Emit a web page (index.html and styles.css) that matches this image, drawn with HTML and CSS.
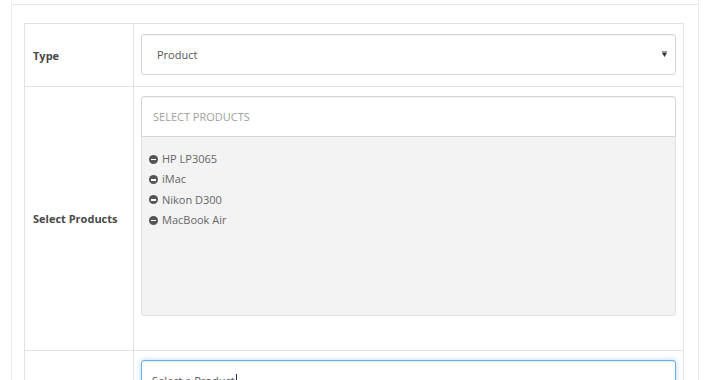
FILE: index.html
```html
<!DOCTYPE html>
<html>
<head>
<meta charset="utf-8">
<link rel="stylesheet" href="styles.css">
</head>
<body>
<div class="panel">
  <div class="panel-heading"></div>
  <div class="panel-body">
    <table class="form-table">
      <tr class="row-type">
        <td class="label-cell">Type</td>
        <td class="field-cell">
          <div class="form-select">
            <span class="select-text">Product</span>
            <svg class="caret" width="5" height="6" viewBox="0 0 5 6"><path d="M0 0.5 H5 V1.3 H0 Z M0 1.8 H5 L2.5 6 Z" fill="#333"/></svg>
          </div>
        </td>
      </tr>
      <tr class="row-products">
        <td class="label-cell">Select Products</td>
        <td class="field-cell products-cell">
          <div class="search-input">SELECT PRODUCTS</div>
          <div class="well">
            <ul class="product-list">
              <li><span class="minus-icon"></span>HP LP3065</li>
              <li><span class="minus-icon"></span>iMac</li>
              <li><span class="minus-icon"></span>Nikon D300</li>
              <li><span class="minus-icon"></span>MacBook Air</li>
            </ul>
          </div>
        </td>
      </tr>
      <tr class="row-product">
        <td class="label-cell"></td>
        <td class="field-cell">
          <div class="focus-input"><span class="focus-text">Select a Product</span><span class="text-cursor"></span></div>
        </td>
      </tr>
    </table>
  </div>
</div>
</body>
</html>
```

FILE: styles.css
```css
html, body {
  margin: 0;
  padding: 0;
  background: #ffffff;
  font-family: "Open Sans", "Noto Sans", sans-serif;
  font-size: 11px;
  color: #555;
  overflow: hidden;
}

.panel {
  margin-left: 11px;
  width: 686px;
  border-left: 1px solid #ececec;
  border-right: 1px solid #ececec;
  height: 400px;
}

.panel-heading {
  height: 4px;
  border-bottom: 1px solid #e8e8e8;
}

.panel-body {
  padding: 18px 14px 0 12px;
}

.form-table {
  width: 660px;
  border-collapse: collapse;
  border: 1px solid #e2e2e2;
}

.form-table td {
  border: 1px solid #e2e2e2;
  vertical-align: middle;
}

.label-cell {
  width: 100px;
  padding: 0 0 0 8px;
  font-weight: 700;
  color: #484848;
}

.field-cell {
  padding: 10px 7px 11px 7px;
}

.form-select {
  display: flex;
  align-items: center;
  box-sizing: border-box;
  height: 41px;
  border: 1px solid #d6d6d6;
  border-radius: 3px;
  padding: 0 8px 0 15px;
  box-shadow: inset 0 1px 1px rgba(0,0,0,0.05);
  color: #555;
}

.select-text {
  flex: 1;
}

.caret {
  display: block;
  margin-top: -2px;
}

.products-cell {
  padding: 9px 7px 34px 7px;
}

.search-input {
  box-sizing: border-box;
  height: 41px;
  border: 1px solid #d6d6d6;
  border-radius: 3px 3px 0 0;
  padding: 0 11px;
  display: flex;
  align-items: center;
  color: #a0a0a0;
  box-shadow: inset 0 1px 1px rgba(0,0,0,0.05);
}

.well {
  box-sizing: border-box;
  height: 179px;
  background: #f3f3f3;
  border: 1px solid #e3e3e3;
  border-top: none;
  border-radius: 0 0 3px 3px;
  padding: 12px 7px;
}

.product-list {
  list-style: none;
  margin: 0;
  padding: 0;
}

.product-list li {
  display: flex;
  align-items: center;
  line-height: 20.4px;
  height: 20.4px;
  color: #666;
}

.minus-icon {
  position: relative;
  width: 9px;
  height: 9px;
  border-radius: 50%;
  background: #555;
  margin-right: 4px;
  flex: none;
}

.minus-icon::after {
  content: "";
  position: absolute;
  left: 2px;
  top: 4px;
  width: 5px;
  height: 1.5px;
  background: #fff;
}

.row-product .field-cell {
  padding: 9px 7px 11px 7px;
}

.focus-input {
  box-sizing: border-box;
  height: 41px;
  border: 1px solid #66afe9;
  border-radius: 3px;
  padding: 0 10px;
  display: flex;
  align-items: center;
  color: #555;
  box-shadow: inset 0 1px 1px rgba(0,0,0,0.075), 0 0 5px rgba(102,175,233,0.5);
}

.text-cursor {
  display: inline-block;
  width: 1px;
  height: 13px;
  background: #333;
  margin-left: 1px;
}
```
